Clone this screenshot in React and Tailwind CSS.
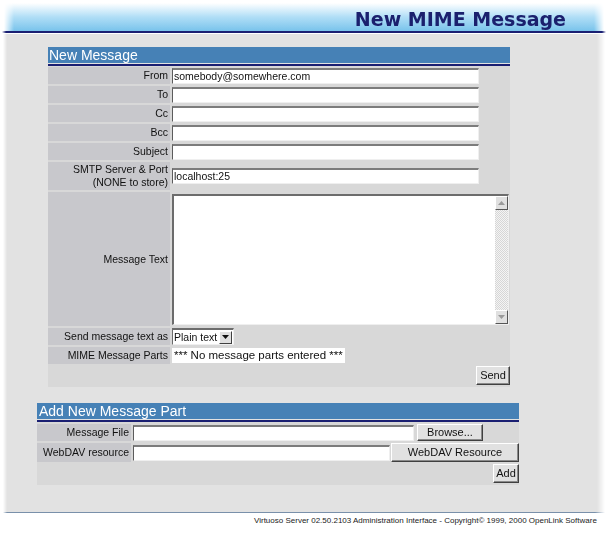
import React from "react";

const inputBase =
  "bg-white border-t-2 border-l border-r border-b border-t-[#7c7c7c] border-l-[#5c5c5c] border-r-[#efefef] border-b-[#efefef] text-[10.5px] leading-[12px] pl-px whitespace-nowrap overflow-hidden text-[#111]";

const btn =
  "bg-[#e1e1e1] border border-t-white border-l-white border-r-[#404040] border-b-[#404040] shadow-[inset_-1px_-1px_0_#8a8a8a] text-[11px] leading-none flex items-center justify-center text-[#111] whitespace-nowrap";

const label =
  "bg-[#c8c8cc] flex items-center justify-end pr-[2px] text-[10.5px] leading-[13px] text-[#111] text-right";

function Row({ h, lbl, children }) {
  return (
    <div className={`flex gap-[2px] ${h}`}>
      <div className={`${label} w-[122px] shrink-0`}>{lbl}</div>
      <div className="flex items-center flex-1">{children}</div>
    </div>
  );
}

function Arrow({ up }) {
  return (
    <div className="w-[13px] h-[14px] bg-[#e0e0e0] border border-t-white border-l-white border-r-[#555] border-b-[#555] flex items-center justify-center">
      <svg width="7" height="4" viewBox="0 0 7 4">
        {up ? (
          <polygon points="3.5,0 7,4 0,4" fill="#9a9a9a" />
        ) : (
          <polygon points="0,0 7,0 3.5,4" fill="#9a9a9a" />
        )}
      </svg>
    </div>
  );
}

export default function App() {
  return (
    <div className="w-[608px] h-[535px] bg-white overflow-hidden font-['Liberation_Sans',Arial,sans-serif]">
      {/* header */}
      <div className="pt-[3px]">
        <div className="mx-[4px] h-[28px] bg-gradient-to-b from-white via-[#b0def6] to-[#78c3eb] flex justify-end pr-[38px] pt-[7px] [mask-image:linear-gradient(to_right,transparent,#000_10px,#000_calc(100%_-_10px),transparent)]">
          <span className="font-['DejaVu_Sans',Verdana,sans-serif] font-bold text-[19px] leading-[19px] text-[#1b206e]">
            New MIME Message
          </span>
        </div>
        <div className="mx-[2px] h-[2px] bg-[#1a1f72] [mask-image:linear-gradient(to_right,transparent,#000_4px,#000_calc(100%_-_4px),transparent)]" />
      </div>

      {/* body */}
      <div className="mt-px mx-[3px] h-[478px] bg-[#e2e2e2] pt-[13px] [mask-image:linear-gradient(to_right,transparent,#000_4px,#000_calc(100%_-_8px),transparent)]">
        {/* Section 1 */}
        <div className="ml-[45px] w-[462px]">
          <div className="h-[16px] bg-[#4681b6] text-white text-[14px] leading-[16px] pl-[1px]">
            New Message
          </div>
          <div className="mt-px h-[2px] bg-[#1a1f72]" />
          <div className="bg-[#d8d8d8] pt-px flex flex-col gap-[2px]">
            <Row h="h-[17px]" lbl="From">
              <div className={`${inputBase} w-[307px] h-[16px]`}>somebody@somewhere.com</div>
            </Row>
            <Row h="h-[17px]" lbl="To">
              <div className={`${inputBase} w-[307px] h-[16px]`} />
            </Row>
            <Row h="h-[17px]" lbl="Cc">
              <div className={`${inputBase} w-[307px] h-[16px]`} />
            </Row>
            <Row h="h-[17px]" lbl="Bcc">
              <div className={`${inputBase} w-[307px] h-[16px]`} />
            </Row>
            <Row h="h-[17px]" lbl="Subject">
              <div className={`${inputBase} w-[307px] h-[16px]`} />
            </Row>
            <Row
              h="h-[28px]"
              lbl={
                <span>
                  SMTP Server &amp; Port
                  <br />
                  (NONE to store)
                </span>
              }
            >
              <div className={`${inputBase} w-[307px] h-[16px]`}>localhost:25</div>
            </Row>
            <Row h="h-[134px]" lbl="Message Text">
              <div className="w-[337px] h-[131px] bg-white border-t-2 border-l-2 border-r border-b border-t-[#6c6c6c] border-l-[#6c6c6c] border-r-[#efefef] border-b-[#efefef] flex justify-end">
                <div className="w-[13px] h-full flex flex-col justify-between bg-[repeating-conic-gradient(#d6d6d6_0_25%,#f4f4f4_0_50%)] bg-[length:2px_2px]">
                  <Arrow up />
                  <Arrow />
                </div>
              </div>
            </Row>
            <Row h="h-[17px]" lbl="Send message text as">
              <div className="w-[62px] h-[17px] bg-white border-t-2 border-l border-t-[#6c6c6c] border-l-[#6c6c6c] border-r border-b border-r-[#efefef] border-b-[#efefef] flex items-center">
                <span className="flex-1 text-[10.5px] leading-[12px] pl-px text-[#111] whitespace-nowrap">
                  Plain text
                </span>
                <div className="w-[13px] h-[13px] mr-px bg-[#e0e0e0] border border-t-white border-l-white border-r-[#404040] border-b-[#404040] flex items-center justify-center">
                  <svg width="7" height="4" viewBox="0 0 7 4">
                    <polygon points="0,0 7,0 3.5,4" fill="#111" />
                  </svg>
                </div>
              </div>
            </Row>
            <Row h="h-[17px]" lbl="MIME Message Parts">
              <div className="bg-white h-[15px] px-[2px] text-[11.5px] leading-[15px] text-[#111] whitespace-nowrap">
                *** No message parts entered ***
              </div>
            </Row>
            <div className="h-[21px] flex justify-end items-start">
              <div className={`${btn} w-[34px] h-[19px]`}>Send</div>
            </div>
          </div>
        </div>

        {/* Section 2 */}
        <div className="ml-[34px] mt-[16px] w-[482px]">
          <div className="h-[16px] bg-[#4681b6] text-white text-[14px] leading-[16px] pl-[2px]">
            Add New Message Part
          </div>
          <div className="mt-px h-[2px] bg-[#1a1f72]" />
          <div className="bg-[#d8d8d8] pt-[2px] flex flex-col gap-[2px]">
            <div className="flex h-[17px] gap-[2px]">
              <div className={`${label} w-[94px] shrink-0`}>Message File</div>
              <div className="flex items-center gap-[3px]">
                <div className={`${inputBase} w-[281px] h-[16px]`} />
                <div className={`${btn} w-[66px] h-[17px]`}>Browse...</div>
              </div>
            </div>
            <div className="flex h-[19px] gap-[2px]">
              <div className={`${label} w-[94px] shrink-0`}>WebDAV resource</div>
              <div className="flex items-center gap-px flex-1">
                <div className={`${inputBase} w-[257px] h-[16px]`} />
                <div className={`${btn} flex-1 h-[19px]`}>WebDAV Resource</div>
              </div>
            </div>
            <div className="h-[21px] flex justify-end items-start">
              <div className={`${btn} w-[26px] h-[19px]`}>Add</div>
            </div>
          </div>
        </div>
      </div>

      {/* footer */}
      <div className="mx-[3px] h-px bg-[#7990aa] [mask-image:linear-gradient(to_right,transparent,#000_4px,#000_calc(100%_-_10px),transparent)]" />
      <div className="pl-[254px] pt-[3px] text-[8px] leading-[10px] text-[#222] whitespace-nowrap">
        Virtuoso Server 02.50.2103 Administration Interface - Copyright© 1999, 2000 OpenLink Software
      </div>
    </div>
  );
}
